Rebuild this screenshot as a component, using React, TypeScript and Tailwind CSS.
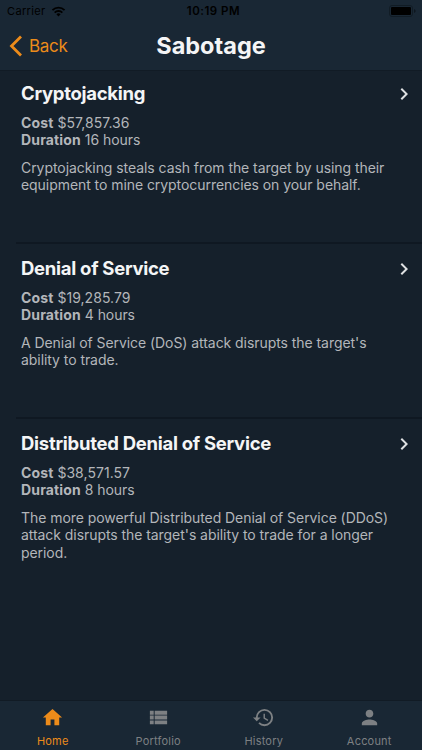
import type { ReactNode } from "react";
import { MdChevronRight, MdHistory, MdHome, MdPerson, MdViewList } from "react-icons/md";

interface Attack {
  name: string;
  cost: string;
  duration: string;
  lines: string[];
}

const attacks: Attack[] = [
  {
    name: "Cryptojacking",
    cost: "$57,857.36",
    duration: "16 hours",
    lines: ["Cryptojacking steals cash from the target by using their", "equipment to mine cryptocurrencies on your behalf."],
  },
  {
    name: "Denial of Service",
    cost: "$19,285.79",
    duration: "4 hours",
    lines: ["A Denial of Service (DoS) attack disrupts the target's", "ability to trade."],
  },
  {
    name: "Distributed Denial of Service",
    cost: "$38,571.57",
    duration: "8 hours",
    lines: [
      "The more powerful Distributed Denial of Service (DDoS)",
      "attack disrupts the target's ability to trade for a longer",
      "period.",
    ],
  },
];

function StatusBar() {
  return (
    <div className="grid h-[22px] grid-cols-3 items-center pr-1.5 pl-[7px] text-[11px] leading-[22px] text-black">
      <div className="flex items-center gap-[5px]">
        <span className="tracking-[0.35px]">Carrier</span>
        <svg width="15" height="11" viewBox="0 0 16 12" fill="none" stroke="currentColor" strokeWidth="2">
          <path d="M1.4 4.5a9.4 9.4 0 0 1 13.2 0" />
          <path d="M3.8 7.2a6 6 0 0 1 8.4 0" />
          <path d="M5.7 9.1a3.3 3.3 0 0 1 4.6 0L8 11.4z" fill="currentColor" stroke="none" />
        </svg>
      </div>
      <span className="pl-1 text-center text-[11.5px] font-semibold tracking-[0.5px]">10:19 PM</span>
      <svg className="justify-self-end" width="27" height="12" viewBox="0 0 27 12">
        <rect x="0.5" y="0.5" width="23" height="11" rx="2.5" fill="none" stroke="#111c25" />
        <rect x="2" y="2" width="20" height="8" rx="1" fill="#000" />
        <path d="M25 4v4c1.2-.5 1.6-1.2 1.6-2S26.2 4.5 25 4z" fill="#0e171f" />
      </svg>
    </div>
  );
}

function AttackRow({ attack, last }: { attack: Attack; last: boolean }) {
  return (
    <li className={`ml-4 h-[175px] pt-1 pl-[5px] ${last ? "" : "border-b-2 border-[#0f1822]"}`}>
      <div className="flex h-[42px] items-center justify-between pr-1.5">
        <h2 className="pb-0.5 text-[18.5px] leading-7 font-bold tracking-[-0.28px] text-[#f4f5f6]">{attack.name}</h2>
        <MdChevronRight size={24} className="text-[#dfe1e3]" />
      </div>
      <div className="-mt-px text-[14px] leading-[17.4px] tracking-[-0.06px] whitespace-nowrap text-[#b3b6ba]">
        <p><strong className="font-bold tracking-[0.15px]">Cost</strong> <span className="tracking-[0.04px]">{attack.cost}</span></p>
        <p><strong className="font-bold tracking-[0.15px]">Duration</strong> {attack.duration}</p>
        <p className="mt-[10px]">
          {attack.lines.map((line) => (
            <span key={line} className="block">{line}</span>
          ))}
        </p>
      </div>
    </li>
  );
}

function Tab({ label, icon, active = false }: { label: string; icon: ReactNode; active?: boolean }) {
  return (
    <div className={`flex flex-col items-center pt-[5px] ${active ? "text-[#ec8b1a]" : "text-[#7d8083]"}`}>
      {icon}
      <span className="mt-1 text-[11px] leading-4 tracking-[0.2px]">{label}</span>
    </div>
  );
}

export default function App() {
  return (
    <div className="flex h-[750px] w-[422px] flex-col overflow-hidden bg-[#15202b] font-['Inter',sans-serif]">
      <header className="h-[71px] shrink-0 border-b border-[#111b25] bg-[#192734]">
        <StatusBar />
        <div className="grid h-12 grid-cols-[100px_1fr_100px] items-center">
          <div className="flex items-center gap-1.5 pl-[9px] text-[#ec8b1a]">
            <svg width="14" height="22" viewBox="0 0 14 22" fill="none" stroke="currentColor" strokeWidth="2.8">
              <path d="M12 1.5 2.5 11l9.5 9.5" />
            </svg>
            <span className="text-[17px] leading-6 tracking-[-0.3px]">Back</span>
          </div>
          <h1 className="text-center text-[23.5px] leading-8 font-bold text-[#f4f5f6]">Sabotage</h1>
        </div>
      </header>
      <ul className="-mt-0.5 flex-1">
        {attacks.map((attack, i) => (
          <AttackRow key={attack.name} attack={attack} last={i === attacks.length - 1} />
        ))}
      </ul>
      <nav className="grid h-[50px] shrink-0 grid-cols-4 border-t border-[#111b25] bg-[#192734]">
        <Tab label="Home" icon={<MdHome size={23} />} active />
        <Tab label="Portfolio" icon={<MdViewList size={23} />} />
        <Tab label="History" icon={<MdHistory size={23} />} />
        <Tab label="Account" icon={<MdPerson size={23} />} />
      </nav>
    </div>
  );
}
